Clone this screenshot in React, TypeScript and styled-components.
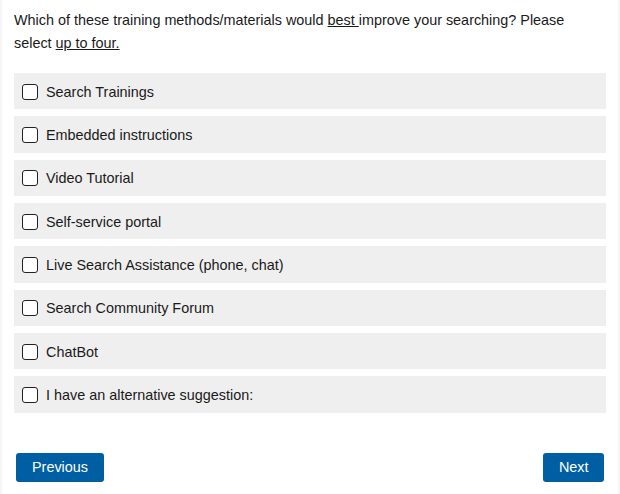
import React from "react";
import styled, { createGlobalStyle } from "styled-components";

const GlobalStyle = createGlobalStyle`
  html, body {
    margin: 0;
    padding: 0;
    background: #fff;
  }
  body {
    font-family: "Liberation Sans", Arial, sans-serif;
    color: #1a1a1a;
  }
`;

const Card = styled.div`
  width: 620px;
  min-height: 494px;
  box-sizing: border-box;
  padding: 9px 12px 0;
  border-left: 2px solid #f6f6f6;
  border-right: 2px solid #f6f6f6;
`;

const Question = styled.p`
  margin: 0 0 19px;
  max-width: 580px;
  font-size: 14.4px;
  line-height: 22.6px;
  color: #1a1a1a;
`;

const Under = styled.span`
  text-decoration: underline;
`;

const OptionList = styled.div`
  display: flex;
  flex-direction: column;
  gap: 7px;
`;

const OptionRow = styled.label`
  display: flex;
  align-items: center;
  gap: 8px;
  height: 36.3px;
  padding: 1px 8px 0;
  box-sizing: border-box;
  background: #efefef;
  font-size: 14.4px;
  color: #1a1a1a;
  cursor: pointer;
`;

const Box = styled.span`
  width: 16px;
  height: 16px;
  box-sizing: border-box;
  border: 1.5px solid #222;
  border-radius: 3px;
  background: #fff;
  flex-shrink: 0;
`;

const Footer = styled.div`
  display: flex;
  justify-content: space-between;
  padding: 40px 2px 0;
`;

const NavButton = styled.button<{ $pad: number }>`
  height: 29px;
  padding: 0 ${(p) => p.$pad}px;
  border: none;
  border-radius: 3px;
  background: #005fa3;
  color: #fff;
  font-family: "Liberation Sans", Arial, sans-serif;
  font-size: 14.4px;
  cursor: pointer;
`;

const options = [
  "Search Trainings",
  "Embedded instructions",
  "Video Tutorial",
  "Self-service portal",
  "Live Search Assistance (phone, chat)",
  "Search Community Forum",
  "ChatBot",
  "I have an alternative suggestion:",
];

export default function App() {
  return (
    <>
      <GlobalStyle />
      <Card>
        <Question>
          Which of these training methods/materials would <Under>best </Under>improve your
          searching? Please select <Under>up to four.</Under>
        </Question>
        <OptionList>
          {options.map((opt) => (
            <OptionRow key={opt}>
              <Box />
              {opt}
            </OptionRow>
          ))}
        </OptionList>
        <Footer>
          <NavButton $pad={16}>Previous</NavButton>
          <NavButton $pad={15.5}>Next</NavButton>
        </Footer>
      </Card>
    </>
  );
}
